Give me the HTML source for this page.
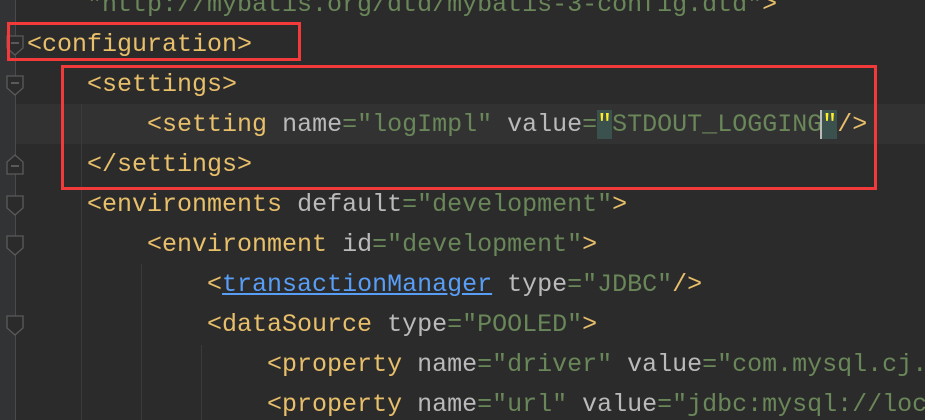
<html><head><style>
html,body{margin:0;width:925px;height:420px;overflow:hidden}
body{background:#2b2b2b;position:relative;font-family:"Liberation Mono",monospace;font-size:25px}
#w{position:absolute;left:0;top:0;width:925px;height:420px;overflow:hidden}
.g{position:absolute;left:0;top:0;width:15px;height:420px;background:#313335}
.fl{position:absolute;left:15px;top:0;width:1px;height:420px;background:#4a4a4a}
.ig{position:absolute;width:1px;background:#3b3b3b}
.l{position:absolute;left:27px;right:0;height:40px;line-height:40px;white-space:pre;color:#a9b7c6;overflow:hidden}
.t{color:#e8bf6a}.a{color:#bababa}.s{color:#6a8759}
.cur{position:absolute;left:16px;top:104px;width:909px;height:40px;background:#323232}
.r{position:absolute;border:3px solid #f23a3a}
</style></head><body><div id="w">
<div class="g"></div><div class="fl"></div>
<div class="cur"></div>
<div class="ig" style="left:81px;top:104px;height:316px"></div>
<div class="ig" style="left:141px;top:264px;height:156px"></div>
<div class="ig" style="left:201px;top:345px;height:75px"></div>
<div class="l s" style="top:-15px">    "http://mybatis.org/dtd/mybatis-3-config.dtd"<span class="t">&gt;</span></div>
<div class="l t" style="top:25px">&lt;configuration&gt;</div>
<div class="l" style="top:65px">    <span class="t">&lt;settings&gt;</span></div>
<div class="l" style="top:105px">        <span class="t">&lt;setting </span><span class="a">name</span><span class="s">="logImpl"</span> <span class="a">value</span><span class="s">=<span style="background:#3b514d;color:#ffef28">"</span>STDOUT_LOGGING<span style="border-left:2px solid #bbb;margin-left:-2px"></span><span style="background:#3b514d;color:#ffef28">"</span></span><span class="t">/&gt;</span></div>
<div class="l" style="top:145px">    <span class="t">&lt;/settings&gt;</span></div>
<div class="l" style="top:185px">    <span class="t">&lt;environments </span><span class="a">default</span><span class="s">="development"</span><span class="t">&gt;</span></div>
<div class="l" style="top:225px">        <span class="t">&lt;environment </span><span class="a">id</span><span class="s">="development"</span><span class="t">&gt;</span></div>
<div class="l" style="top:265px">            <span class="t">&lt;</span><span style="color:#589df6;text-decoration:underline">transactionManager</span> <span class="a">type</span><span class="s">="JDBC"</span><span class="t">/&gt;</span></div>
<div class="l" style="top:305px">            <span class="t">&lt;dataSource </span><span class="a">type</span><span class="s">="POOLED"</span><span class="t">&gt;</span></div>
<div class="l" style="top:345px">                <span class="t">&lt;property </span><span class="a">name</span><span class="s">="driver"</span> <span class="a">value</span><span class="s">="com.mysql.cj.</span></div>
<div class="l" style="top:385px">                <span class="t">&lt;property </span><span class="a">name</span><span class="s">="url"</span> <span class="a">value</span><span class="s">="jdbc:mysql://loc</span></div>
<svg style="position:absolute;left:0;top:0" width="30" height="420"><g fill="#2b2b2b" stroke="#5a5a5a" stroke-width="1.3">
<path d="M7 36h16v12l-8 7l-8-7z"/><path d="M7 76h16v12l-8 7l-8-7z"/><path d="M7 174h16v-12l-8-7l-8 7z"/><path d="M7 196h16v12l-8 7l-8-7z"/><path d="M7 236h16v12l-8 7l-8-7z"/><path d="M7 316h16v12l-8 7l-8-7z"/></g>
<g stroke="#777" stroke-width="1.3"><path d="M11 43h8M11 83h8M11 166h8"/></g></svg>
<div class="r" style="left:7px;top:22px;width:288px;height:33px"></div>
<div class="r" style="left:61px;top:65px;width:810px;height:119px"></div>
</div></body></html>
